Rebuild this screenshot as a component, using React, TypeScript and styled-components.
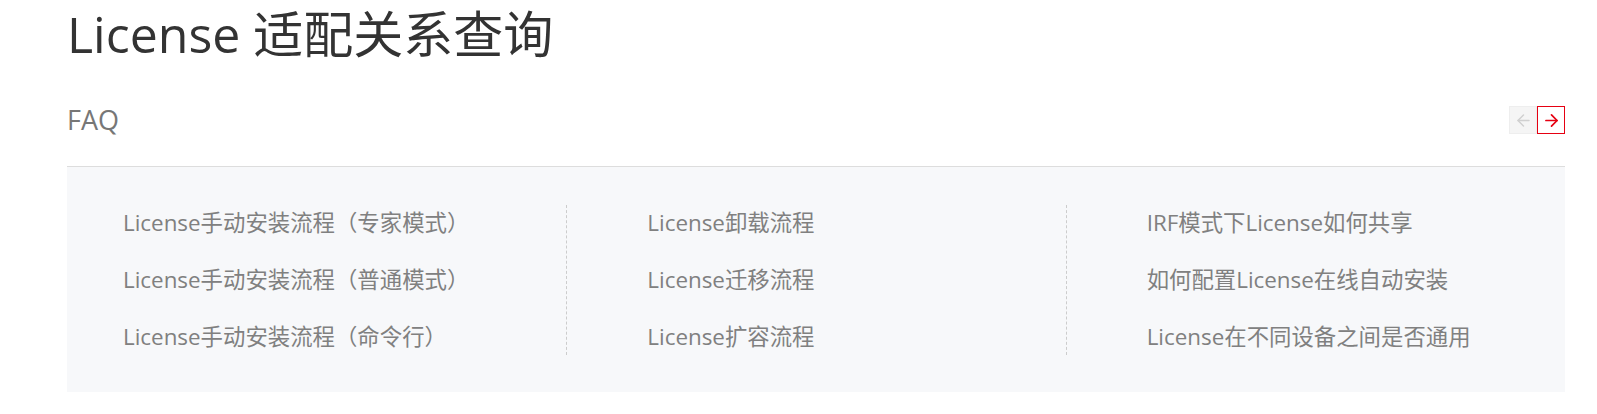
import styled, { createGlobalStyle } from 'styled-components';
import { ArrowLeft, ArrowRight } from 'lucide-react';

const GlobalStyle = createGlobalStyle`
  body {
    margin: 0;
    background: #ffffff;
    font-family: 'Open Sans', 'Noto Sans CJK SC', sans-serif;
  }
`;

const FAQ_COLUMNS: string[][] = [
  [
    'License手动安装流程（专家模式）',
    'License手动安装流程（普通模式）',
    'License手动安装流程（命令行）',
  ],
  ['License卸载流程', 'License迁移流程', 'License扩容流程'],
  [
    'IRF模式下License如何共享',
    '如何配置License在线自动安装',
    'License在不同设备之间是否通用',
  ],
];

const Page = styled.div`
  width: 1498px;
  padding-left: 67px;
`;

const Title = styled.h1`
  margin: 0;
  height: 68px;
  line-height: 68px;
  font-size: 50px;
  font-weight: normal;
  color: #333333;
`;

const FaqHeader = styled.div`
  display: flex;
  align-items: center;
  justify-content: space-between;
  padding: 38px 0 32px;
  border-bottom: 1px solid #dddddd;
`;

const FaqTitle = styled.h2`
  margin: 0;
  height: 28px;
  line-height: 28px;
  font-size: 27px;
  font-weight: normal;
  color: #777777;
`;

const Pager = styled.div`
  display: flex;
`;

const PagerButton = styled.button<{ $active: boolean }>`
  display: flex;
  align-items: center;
  justify-content: center;
  width: 28px;
  height: 28px;
  padding: 0;
  box-sizing: border-box;
  border: 1px solid ${p => (p.$active ? '#e60012' : '#eeeeee')};
  background: ${p => (p.$active ? '#ffffff' : '#f5f5f5')};
  color: ${p => (p.$active ? '#e60012' : '#d0d0d0')};
  cursor: ${p => (p.$active ? 'pointer' : 'default')};
`;

const Panel = styled.div`
  display: grid;
  grid-template-columns: repeat(3, 1fr);
  padding: 38px 0 37px;
  background: #f7f8fa;
`;

const Column = styled.ul<{ $first: boolean }>`
  display: flex;
  flex-direction: column;
  gap: 21px;
  margin: 0;
  padding: 0 0 0 ${p => (p.$first ? '56px' : '80px')};
  list-style: none;
  border-left: ${p => (p.$first ? 'none' : '1px dashed #cccccc')};
`;

const Item = styled.li`
  height: 36px;
  line-height: 36px;
  font-size: 22.4px;
  color: #808080;
  white-space: nowrap;
  cursor: pointer;
`;

export default function App() {
  return (
    <>
      <GlobalStyle />
      <Page>
        <Title>License 适配关系查询</Title>
        <FaqHeader>
          <FaqTitle>FAQ</FaqTitle>
          <Pager>
            <PagerButton $active={false} aria-label="previous">
              <ArrowLeft size={19} strokeWidth={1.8} />
            </PagerButton>
            <PagerButton $active aria-label="next">
              <ArrowRight size={19} strokeWidth={2.2} />
            </PagerButton>
          </Pager>
        </FaqHeader>
        <Panel>
          {FAQ_COLUMNS.map((col, i) => (
            <Column key={i} $first={i === 0}>
              {col.map(q => (
                <Item key={q}>{q}</Item>
              ))}
            </Column>
          ))}
        </Panel>
      </Page>
    </>
  );
}
